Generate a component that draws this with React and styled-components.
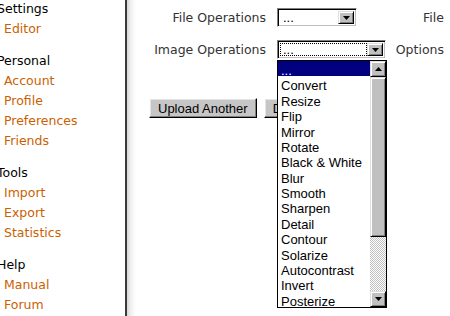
import React from 'react'
import styled, { createGlobalStyle } from 'styled-components'

const GlobalStyle = createGlobalStyle`
    html, body {
        margin: 0;
        padding: 0;
        background: #fff;
        overflow: hidden;
    }
`

const Page = styled.div`
    display: flex;
    min-height: 100vh;
    width: 700px;
`

const Sidebar = styled.div`
    width: 125px;
    border-right: 2px solid #3a3a3a;
    font-family: 'DejaVu Sans', Verdana, sans-serif;
    font-size: 12.5px;
    line-height: 20px;
    overflow: hidden;
`

const Menu = styled.div`
    margin: -1px 0 0 -3px;
`

const Group = styled.div`
    margin-bottom: 12px;
`

const Heading = styled.div`
    color: #000;
`

const MenuLink = styled.a`
    display: block;
    padding-left: 7px;
    color: #cc5f00;
    text-decoration: none;
`

const Main = styled.div`
    flex: 1;
    padding-top: 8px;
    background: linear-gradient(90deg, #d6d6d6 0, #ececec 3px, #fafafa 7px, #fff 9px);
    font-family: 'DejaVu Sans', Verdana, sans-serif;
    font-size: 12.5px;
    color: #333;
`

const Form = styled.div`
    display: grid;
    grid-template-columns: 139px 120px 58px 100px;
    grid-auto-rows: 19px;
    row-gap: 13px;
    align-items: center;
`

const Label = styled.div`
    text-align: right;
    white-space: nowrap;
`

const SelectWrap = styled.div`
    position: relative;
    width: ${(p) => p.$width}px;
    margin-left: 11px;
    height: 19px;
`

const SelectBox = styled.div`
    display: flex;
    height: 19px;
    box-sizing: border-box;
    border: 1px solid;
    border-color: #808080 #fff #fff #808080;
    box-shadow: inset 1px 1px #000, inset -1px -1px #c0c0c0;
    padding: 2px;
    background: #fff;
    font-family: 'Liberation Sans', Arial, sans-serif;
    font-size: 13px;
    color: #000;
`

const Field = styled.div`
    flex: 1;
    display: flex;
    align-items: center;
    padding-left: 3px;
    line-height: 13px;
    outline: ${(p) => (p.$focus ? '1px dotted #000' : 'none')};
    outline-offset: -1px;
`

const Raised = styled.div`
    box-sizing: border-box;
    background: #c0c0c0;
    border: 1px solid;
    border-color: #dfdfdf #000 #000 #dfdfdf;
    box-shadow: inset 1px 1px #fff, inset -1px -1px #808080;
    display: flex;
    align-items: center;
    justify-content: center;
`

const ArrowButton = styled(Raised)`
    width: 16px;
    height: 100%;
`

const ScrollButton = styled(Raised)`
    width: 16px;
    height: 16px;
`

const Thumb = styled(Raised)`
    width: 16px;
    height: 160px;
`

const Track = styled.div`
    flex: 1;
    background-color: #fff;
    background-image: repeating-conic-gradient(#c0c0c0 0 25%, #fff 0 50%);
    background-size: 2px 2px;
`

const Dropdown = styled.div`
    position: absolute;
    top: 20px;
    left: 0;
    width: 110px;
    height: 248px;
    box-sizing: border-box;
    border: 1px solid #000;
    background: #fff;
    display: flex;
    z-index: 2;
    font-family: 'Liberation Sans', Arial, sans-serif;
    font-size: 13px;
    color: #000;
`

const Options = styled.div`
    flex: 1;
    overflow: hidden;
`

const Option = styled.div`
    height: 13.375px;
    padding-top: 2px;
    line-height: 15.375px;
    padding-left: 3px;
    white-space: nowrap;
    background: ${(p) => (p.$selected ? '#000080' : 'transparent')};
    color: ${(p) => (p.$selected ? '#fff' : '#000')};
`

const Scrollbar = styled.div`
    width: 16px;
    display: flex;
    flex-direction: column;
`

const Actions = styled.div`
    display: flex;
    gap: 7px;
    margin: 39px 0 0 22px;
`

const Button = styled.button`
    height: 20px;
    padding: 0 8px;
    box-sizing: border-box;
    font-family: 'Liberation Sans', Arial, sans-serif;
    font-size: 13px;
    color: #000;
    background: #c6c6c6;
    border: 1px solid;
    border-color: #fff #000 #000 #fff;
    box-shadow: inset -1px -1px #808080, inset 1px 1px #e4e4e4;
    border-radius: 0;
`

const Arrow = ({ up }) => (
    <svg width="7" height="4" viewBox="0 0 7 4">
        <polygon points={up ? '3.5,0 7,4 0,4' : '0,0 7,0 3.5,4'} fill="#000" />
    </svg>
)

const menu = [
    { title: 'Settings', links: ['Editor'] },
    { title: 'Personal', links: ['Account', 'Profile', 'Preferences', 'Friends'] },
    { title: 'Tools', links: ['Import', 'Export', 'Statistics'] },
    { title: 'Help', links: ['Manual', 'Forum'] },
]

const operations = [
    '...', 'Convert', 'Resize', 'Flip', 'Mirror', 'Rotate', 'Black & White', 'Blur',
    'Smooth', 'Sharpen', 'Detail', 'Contour', 'Solarize', 'Autocontrast', 'Invert',
    'Posterize',
]

const App = () => (
    <React.Fragment>
        <GlobalStyle />
        <Page>
            <Sidebar>
                <Menu>
                    {menu.map((group) => (
                        <Group key={group.title}>
                            <Heading>{group.title}</Heading>
                            {group.links.map((link) => (
                                <MenuLink key={link} href="#">
                                    {link}
                                </MenuLink>
                            ))}
                        </Group>
                    ))}
                </Menu>
            </Sidebar>
            <Main>
                <Form>
                    <Label>File Operations</Label>
                    <SelectWrap $width={80}>
                        <SelectBox>
                            <Field>...</Field>
                            <ArrowButton>
                                <Arrow />
                            </ArrowButton>
                        </SelectBox>
                    </SelectWrap>
                    <Label>File</Label>
                    <div />

                    <Label>Image Operations</Label>
                    <SelectWrap $width={109}>
                        <SelectBox>
                            <Field $focus>...</Field>
                            <ArrowButton>
                                <Arrow />
                            </ArrowButton>
                        </SelectBox>
                        <Dropdown>
                            <Options>
                                {operations.map((op, i) => (
                                    <Option key={op} $selected={i === 0}>
                                        {op}
                                    </Option>
                                ))}
                            </Options>
                            <Scrollbar>
                                <ScrollButton>
                                    <Arrow up />
                                </ScrollButton>
                                <Thumb />
                                <Track />
                                <ScrollButton>
                                    <Arrow />
                                </ScrollButton>
                            </Scrollbar>
                        </Dropdown>
                    </SelectWrap>
                    <Label>Options</Label>
                    <div />
                </Form>
                <Actions>
                    <Button>Upload Another</Button>
                    <Button>Download</Button>
                </Actions>
            </Main>
        </Page>
    </React.Fragment>
)

export default App
